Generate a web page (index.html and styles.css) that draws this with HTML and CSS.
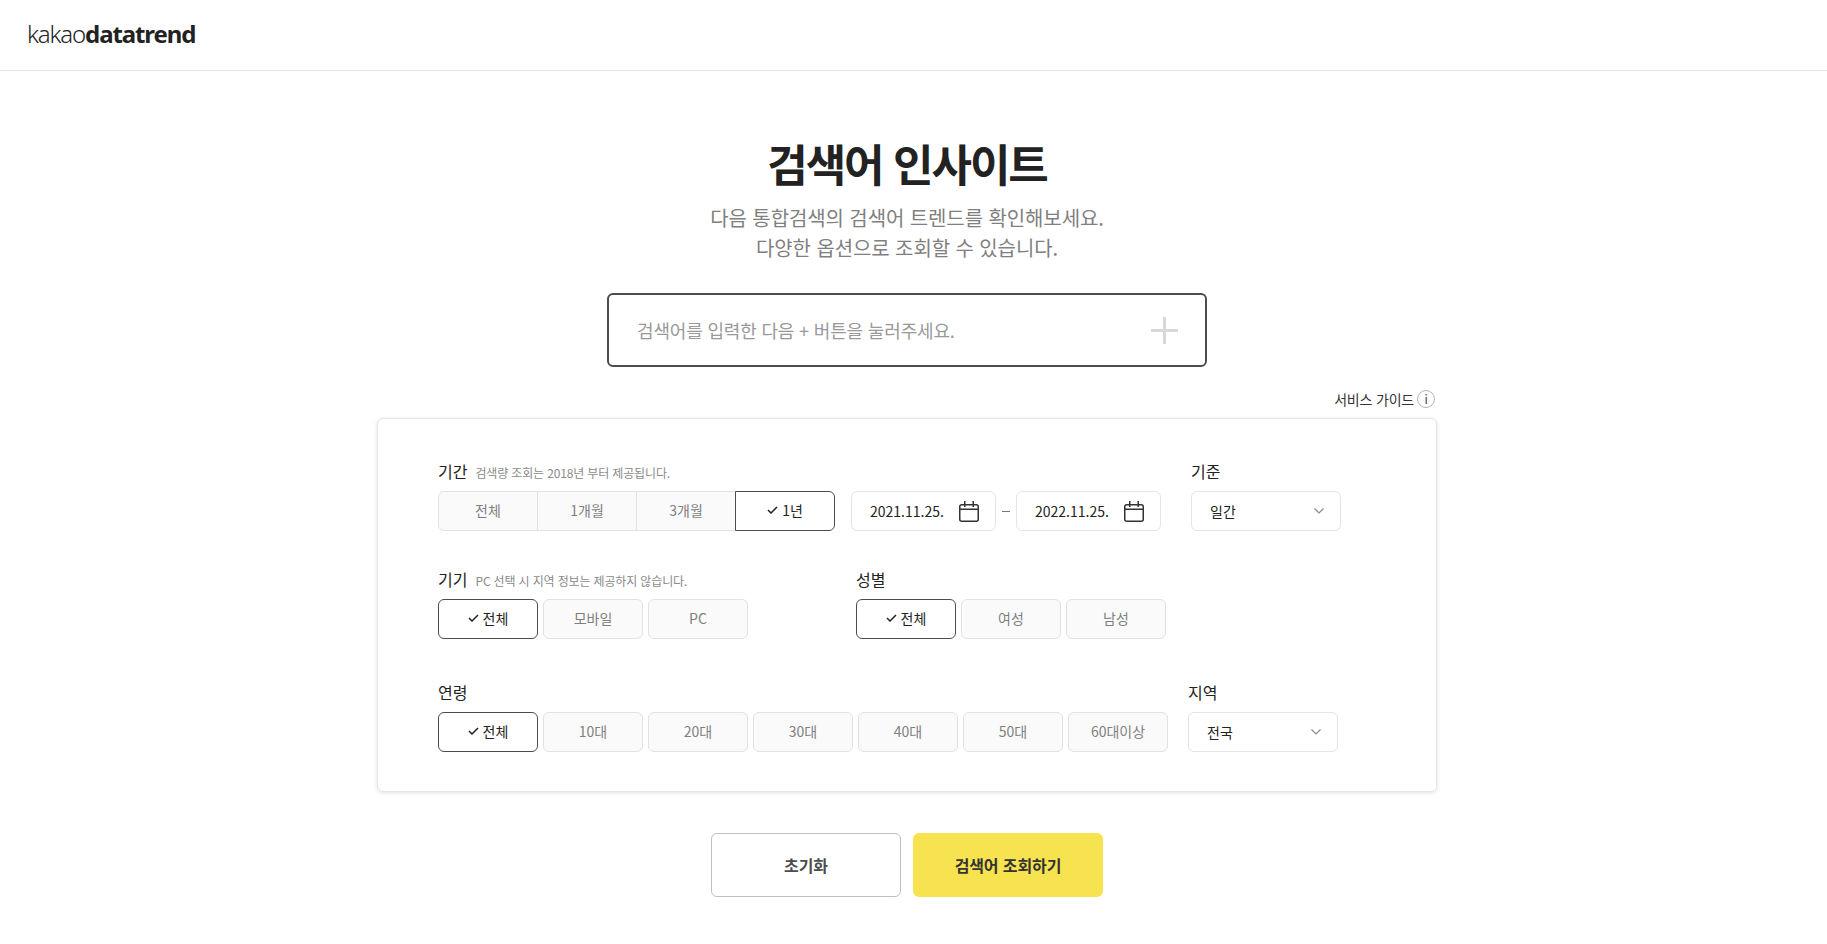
FILE: index.html
```html
<!DOCTYPE html>
<html lang="ko">
<head>
<meta charset="utf-8">
<title>kakao datatrend</title>
<link rel="stylesheet" href="styles.css">
</head>
<body>
<header class="topbar">
  <a class="logo"><span class="logo-light">kakao</span><span class="logo-bold">datatrend</span></a>
</header>
<main class="page">
  <h1 class="title">검색어 인사이트</h1>
  <p class="subtitle">다음 통합검색의 검색어 트렌드를 확인해보세요.<br>다양한 옵션으로 조회할 수 있습니다.</p>
  <div class="searchbox">
    <span class="placeholder">검색어를 입력한 다음 + 버튼을 눌러주세요.</span>
    <svg class="plus" width="27" height="27" viewBox="0 0 27 27"><path d="M13.5 0v27M0 13.5h27" stroke="#d8d8d8" stroke-width="3" fill="none"/></svg>
  </div>
  <div class="panel">
    <div class="guide"><span>서비스 가이드</span><span class="guide-i">i</span></div>
    <section class="card">
      <div class="row row-period">
        <div class="field">
          <div class="label">기간<small class="hint">검색량 조회는 2018년 부터 제공됩니다.</small></div>
          <div class="seg">
            <button class="opt">전체</button>
            <button class="opt">1개월</button>
            <button class="opt">3개월</button>
            <button class="opt on"><svg class="check" width="11" height="8" viewBox="0 0 11 8"><path d="M1 4l3 3 6-6" stroke="#222" stroke-width="1.5" fill="none"/></svg>1년</button>
          </div>
        </div>
        <div class="dates">
          <div class="date"><span>2021.11.25.</span><svg width="20" height="21" viewBox="0 0 20 21"><rect x="0.75" y="3.75" width="18.5" height="16.5" rx="2" fill="none" stroke="#333" stroke-width="1.5"/><path d="M1 8.25h18M5.75 0v6M14.25 0v6" stroke="#333" stroke-width="1.5" fill="none"/></svg></div>
          <span class="dash"></span>
          <div class="date"><span>2022.11.25.</span><svg width="20" height="21" viewBox="0 0 20 21"><rect x="0.75" y="3.75" width="18.5" height="16.5" rx="2" fill="none" stroke="#333" stroke-width="1.5"/><path d="M1 8.25h18M5.75 0v6M14.25 0v6" stroke="#333" stroke-width="1.5" fill="none"/></svg></div>
        </div>
        <div class="field field-basis">
          <div class="label">기준</div>
          <div class="select"><span>일간</span><svg width="10" height="6" viewBox="0 0 10 6"><path d="M0.5 0.5L5 5l4.5-4.5" stroke="#8a8a8a" stroke-width="1.2" fill="none"/></svg></div>
        </div>
      </div>
      <div class="row row-device">
        <div class="field">
          <div class="label">기기<small class="hint">PC 선택 시 지역 정보는 제공하지 않습니다.</small></div>
          <div class="group">
            <button class="opt on"><svg class="check" width="11" height="8" viewBox="0 0 11 8"><path d="M1 4l3 3 6-6" stroke="#222" stroke-width="1.5" fill="none"/></svg>전체</button>
            <button class="opt">모바일</button>
            <button class="opt">PC</button>
          </div>
        </div>
        <div class="field field-gender">
          <div class="label">성별</div>
          <div class="group">
            <button class="opt on"><svg class="check" width="11" height="8" viewBox="0 0 11 8"><path d="M1 4l3 3 6-6" stroke="#222" stroke-width="1.5" fill="none"/></svg>전체</button>
            <button class="opt">여성</button>
            <button class="opt">남성</button>
          </div>
        </div>
      </div>
      <div class="row row-age">
        <div class="field">
          <div class="label">연령</div>
          <div class="group">
            <button class="opt on"><svg class="check" width="11" height="8" viewBox="0 0 11 8"><path d="M1 4l3 3 6-6" stroke="#222" stroke-width="1.5" fill="none"/></svg>전체</button>
            <button class="opt">10대</button>
            <button class="opt">20대</button>
            <button class="opt">30대</button>
            <button class="opt">40대</button>
            <button class="opt">50대</button>
            <button class="opt">60대이상</button>
          </div>
        </div>
        <div class="field field-region">
          <div class="label">지역</div>
          <div class="select"><span>전국</span><svg width="10" height="6" viewBox="0 0 10 6"><path d="M0.5 0.5L5 5l4.5-4.5" stroke="#8a8a8a" stroke-width="1.2" fill="none"/></svg></div>
        </div>
      </div>
    </section>
  </div>
  <div class="actions">
    <button class="action action-reset">초기화</button>
    <button class="action action-search">검색어 조회하기</button>
  </div>
</main>
</body>
</html>
```
FILE: styles.css
```css
* { box-sizing: border-box; }
html, body { margin: 0; padding: 0; background: #fff; overflow: hidden; }
body {
  height: 944px;
  font-family: "Noto Sans CJK KR", "Noto Sans", sans-serif;
  color: #222;
}
button { font-family: inherit; cursor: pointer; padding: 0; margin: 0; }

.topbar {
  height: 71px;
  border-bottom: 1px solid #e5e5e5;
  padding: 0 0 0 27px;
  display: flex;
  align-items: center;
}
.logo {
  font-family: "Noto Sans", "Open Sans", sans-serif;
  font-size: 24px;
  line-height: 30px;
  letter-spacing: -1.1px;
  color: #222;
  margin-top: -3px;
}
.logo-light { font-weight: 300; }
.logo-bold { font-weight: 700; }

.page {
  padding-right: 13px;
  display: flex;
  flex-direction: column;
  align-items: center;
}
.title {
  margin: 66px 0 0;
  font-size: 44px;
  line-height: 52px;
  font-weight: 700;
  letter-spacing: -2px;
  color: #222;
}
.subtitle {
  margin: 14px 0 0;
  font-size: 20px;
  line-height: 30px;
  letter-spacing: -0.1px;
  text-align: center;
  color: #7f7f7f;
}
.searchbox {
  margin-top: 30px;
  width: 600px;
  height: 74px;
  border: 2px solid #4c4c4c;
  border-radius: 6px;
  padding: 0 27px 0 28px;
  display: flex;
  align-items: center;
  justify-content: space-between;
}
.placeholder { font-size: 18px; letter-spacing: -0.17px; color: #999; }

.panel { width: 1060px; margin-top: 23px; }
.guide {
  height: 18px;
  margin-bottom: 10px;
  padding-right: 2px;
  display: flex;
  justify-content: flex-end;
  align-items: center;
  gap: 3px;
  font-size: 14px;
  line-height: 18px;
  letter-spacing: -0.2px;
  color: #333;
}
.guide-i {
  width: 18px;
  height: 18px;
  border: 1px solid #b5b5b5;
  border-radius: 50%;
  font-size: 12px;
  line-height: 16px;
  text-align: center;
  color: #444;
}
.card {
  height: 374px;
  border: 1px solid #e5e5e5;
  border-radius: 6px;
  box-shadow: 0 1px 4px rgba(0, 0, 0, 0.12);
  padding: 42px 0 0 60px;
}
.row { display: flex; align-items: flex-end; }
.row-device { margin-top: 38px; }
.row-age { margin-top: 43px; }

.label {
  height: 22px;
  margin-bottom: 8px;
  font-size: 16px;
  line-height: 20px;
  color: #222;
}
.hint { margin-left: 8px; font-size: 12px; letter-spacing: -0.15px; color: #8a8a8a; }

.seg { display: flex; }
.seg .opt { margin-left: -1px; border-radius: 0; width: 100px; }
.seg .opt:first-child { margin-left: 0; border-radius: 6px 0 0 6px; }
.seg .opt:last-child { border-radius: 0 6px 6px 0; }
.group { display: flex; gap: 5px; }

.opt {
  width: 100px;
  height: 40px;
  padding-bottom: 2px;
  border: 1px solid #e2e2e2;
  border-radius: 6px;
  background: #fafafa;
  font-size: 14px;
  color: #7f7f7f;
  display: flex;
  align-items: center;
  justify-content: center;
}
.opt.on {
  position: relative;
  background: #fff;
  border-color: #4c4c4c;
  color: #222;
}
.check { margin-right: 4px; }

.dates { display: flex; align-items: center; margin-left: 16px; }
.date {
  width: 145px;
  height: 40px;
  border: 1px solid #e5e5e5;
  border-radius: 6px;
  padding: 0 16px 0 18px;
  display: flex;
  align-items: center;
  justify-content: space-between;
  font-size: 14px;
  color: #222;
}
.dash { width: 8px; height: 1px; margin: 0 6px; background: #777; }

.field-basis { margin-left: 30px; }
.field-gender { margin-left: 108px; }
.field-region { margin-left: 20px; }
.select {
  width: 150px;
  height: 40px;
  border: 1px solid #e5e5e5;
  border-radius: 6px;
  padding: 0 16px 0 18px;
  display: flex;
  align-items: center;
  justify-content: space-between;
  font-size: 14px;
  color: #222;
}

.actions { margin-top: 41px; display: flex; gap: 12px; }
.action {
  width: 190px;
  height: 64px;
  border-radius: 6px;
  font-size: 16px;
  font-weight: 700;
  letter-spacing: -0.1px;
}
.action-reset { background: #fff; border: 1px solid #bfbfbf; color: #4c4c4c; }
.action-search { background: #f7e34f; border: 0; color: #333; }
```
